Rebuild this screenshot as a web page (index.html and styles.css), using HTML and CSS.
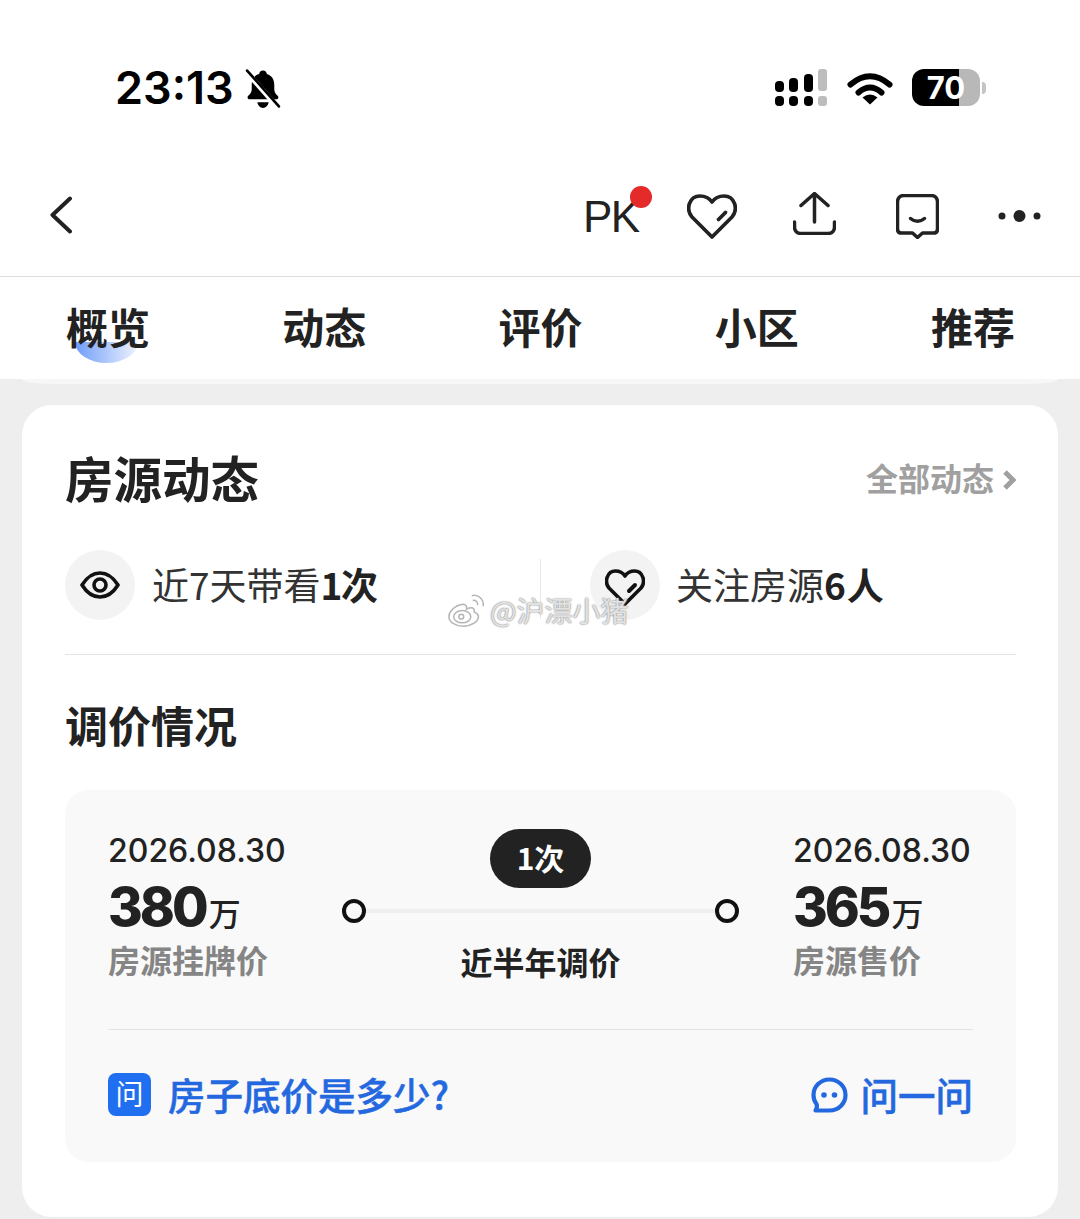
FILE: index.html
```html
<!DOCTYPE html>
<html lang="zh-CN">
<head>
<meta charset="utf-8">
<title>房源动态</title>
<link rel="stylesheet" href="styles.css">
</head>
<body>
<div class="page">
  <header class="status">
    <div class="status-left">
      <span class="time">23:13</span>
      <svg class="bell" viewBox="0 0 34 39"><path d="M17 1.500c2.200 0 3.600 1.600 3.800 3.400 5 1.500 7.200 5.600 7.200 10.600v4.500c0 2.500 1.500 4.300 3.300 6.200 1.300 1.500.6 3.300-1.400 3.300H4c-2 0-2.700-1.800-1.400-3.300C4.500 24.300 6 22.500 6 20v-4.500c0-5 2.200-9.100 7.200-10.600.2-1.800 1.600-3.400 3.800-3.400zM11.500 32.500h11c-.5 3.200-2.800 5.500-5.500 5.500s-5-2.300-5.500-5.500z" fill="#000"/><path d="M1 3l31 35" stroke="#fff" stroke-width="5"/><path d="M1.500 1.500l31 35" stroke="#000" stroke-width="2.600" stroke-linecap="round"/></svg>
    </div>
    <div class="status-right">
      <svg class="signal" viewBox="0 0 52 37"><g fill="#000"><rect x="0" y="12" width="9" height="11" rx="4"/><rect x="14" y="9" width="9" height="14" rx="4"/><rect x="29" y="5" width="9" height="18" rx="4"/><rect x="0" y="27" width="9" height="10" rx="4"/><rect x="14" y="27" width="9" height="10" rx="4"/><rect x="29" y="27" width="9" height="10" rx="4"/></g><g fill="#bdbdbd"><rect x="43" y="0" width="9" height="22" rx="3"/><rect x="43" y="27" width="9" height="10" rx="3"/></g></svg>
      <svg class="wifi" viewBox="0 0 46 34"><g fill="none" stroke="#000" stroke-width="6" stroke-linecap="round"><path d="M3.500 13.500Q23-3 42.500 13.500"/><path d="M11.500 21.500Q23 11.500 34.500 21.500"/></g><path d="M23 33.500L15.500 26.500Q23 20.500 30.500 26.500Z" fill="#000"/></svg>
      <div class="battery"><span class="battery-num">70</span></div>
      <span class="battery-nub"></span>
    </div>
  </header>

  <nav class="nav">
    <svg class="back" viewBox="0 0 24 38"><path d="M21 2.500L3.500 19 21 35.500" fill="none" stroke="#222" stroke-width="4" stroke-linecap="round" stroke-linejoin="round"/></svg>
    <div class="nav-actions">
      <span class="pk">PK<i class="pk-dot"></i></span>
      <svg class="ico-heart" viewBox="0 0 50 45"><path d="M25 43L5 23C-1.500 15.500 2 2 13 2c5.500 0 9.500 2.500 12 6 2.500-3.500 6.500-6 12-6 11 0 14.500 13.500 8 21z" fill="none" stroke="#222" stroke-width="3.700" stroke-linejoin="round"/><path d="M31.500 25.500l7-7" stroke="#222" stroke-width="3.700" stroke-linecap="round"/></svg>
      <svg class="ico-share" viewBox="0 0 43 43"><g fill="none" stroke="#222" stroke-width="3.500" stroke-linecap="round" stroke-linejoin="round"><path d="M21.500 30V2M8 13.500L21.500 1.500 35 13.500"/><path d="M1.500 30v5c0 4 2.500 6.500 6.500 6.500h27c4 0 6.500-2.500 6.500-6.500v-5"/></g></svg>
      <svg class="ico-msg" viewBox="0 0 43 45"><g fill="none" stroke="#222" stroke-width="3.500" stroke-linecap="round" stroke-linejoin="round"><path d="M8 1.500h27c4 0 6.500 2.500 6.500 6.500v27c0 2.500-1.500 4-4 4h-11L21.500 43.500 16.500 39h-11c-2.500 0-4-1.500-4-4V8c0-4 2.500-6.500 6.500-6.500z"/><path d="M14.500 24.500c4 3.500 10 3.500 14 0"/></g></svg>
      <svg class="ico-more" viewBox="0 0 43 12"><circle cx="4" cy="6" r="3.500" fill="#222"/><circle cx="21.500" cy="6" r="6" fill="#222"/><circle cx="39" cy="6" r="3.500" fill="#222"/></svg>
    </div>
  </nav>

  <div class="tabs">
    <span class="tab tab-on">概览<i class="tab-glow"></i></span>
    <span class="tab">动态</span>
    <span class="tab">评价</span>
    <span class="tab">小区</span>
    <span class="tab">推荐</span>
  </div>

  <div class="prev-card"></div>

  <main class="card">
    <div class="card-head">
      <h1 class="title">房源动态</h1>
      <a class="more">全部动态<svg class="more-arrow" viewBox="0 0 14 24"><path d="M3 4l8 8-8 8" fill="none" stroke="#a0a0a0" stroke-width="5"/></svg></a>
    </div>

    <div class="stats">
      <div class="stat">
        <span class="stat-ico"><svg class="eye" viewBox="0 0 40 28"><path d="M2 14C7 6 13 2 20 2s13 4 18 12c-5 8-11 12-18 12S7 22 2 14z" fill="none" stroke="#111" stroke-width="3.600" stroke-linejoin="round"/><circle cx="20" cy="14" r="6" fill="none" stroke="#111" stroke-width="3.600"/></svg></span>
        <span class="stat-text">近7天带看<b class="stat-num">1次</b></span>
      </div>
      <div class="stat stat-right">
        <span class="stat-ico"><svg class="heart-s" viewBox="0 0 40 37"><path d="M20 35L4 19C-1 13 2 2 10.500 2c4.500 0 7.500 2 9.500 5 2-3 5-5 9.500-5C38 2 41 13 36 19z" fill="none" stroke="#111" stroke-width="3.600" stroke-linejoin="round"/><path d="M24 22l6-6" stroke="#111" stroke-width="4" stroke-linecap="round"/></svg></span>
        <span class="stat-text">关注房源<b class="stat-num-wide">6人</b></span>
      </div>
    </div>

    <h2 class="subtitle">调价情况</h2>

    <section class="panel">
      <div class="prices">
        <div class="price">
          <div class="date">2026.08.30</div>
          <div class="amount">380<span class="unit">万</span></div>
          <div class="label">房源挂牌价</div>
        </div>
        <div class="trend">
          <span class="pill">1次</span>
          <div class="track"><i class="node"></i><i class="line"></i><i class="node"></i></div>
          <div class="trend-label">近半年调价</div>
        </div>
        <div class="price price-end">
          <div class="date">2026.08.30</div>
          <div class="amount">365<span class="unit">万</span></div>
          <div class="label">房源售价</div>
        </div>
      </div>
      <div class="ask">
        <div class="ask-left"><span class="ask-badge">问</span><span class="ask-text">房子底价是多少?</span></div>
        <div class="ask-right">
          <svg class="ask-ico" viewBox="0 0 37 36"><path d="M18.500 2.500C27.500 2.500 34.500 9.500 34.500 18S27.500 33.500 18.500 33.500H4.500C6 31 6.500 29 5.500 27 3.500 24.500 2.500 21.500 2.500 18 2.500 9.500 9.500 2.500 18.500 2.500z" fill="none" stroke="#2468e0" stroke-width="4.200" stroke-linejoin="round"/><circle cx="13" cy="18" r="2.800" fill="#2468e0"/><circle cx="23.500" cy="18" r="2.800" fill="#2468e0"/></svg>
          <span class="ask-link">问一问</span>
        </div>
      </div>
    </section>
  </main>

  <div class="watermark">
    <svg class="wb" viewBox="0 0 42 38"><g fill="none" stroke="#b5b5b5" stroke-width="1.600"><path d="M17 13C8 14 2 21 2 26c0 6 8 10 15 10 9 0 16-5 16-10 0-3-3-4-4.500-5 1-3-1-5-5-4-2 .5-3 1-3 1 .5-2-.5-5-3.500-5z" fill="#fff"/><ellipse cx="16" cy="26" rx="9" ry="6.500"/><circle cx="15" cy="26" r="2.500"/><path d="M26 4c7-2 13 4 12 11M27 9c3-1 6 2 5 5"/></g></svg>
    <span class="wm-text">@沪漂小猪</span>
  </div>
</div>
</body>
</html>
```

FILE: styles.css
```css
* { box-sizing: border-box; margin: 0; padding: 0; }
html, body { width: 1080px; height: 1219px; overflow: hidden; }
body { font-family: "Noto Sans CJK SC", "Noto Sans", sans-serif; color: #222; background: #eeeeef; }
i { display: block; font-style: normal; }
svg { display: block; flex: none; }
.page { position: relative; width: 1080px; height: 1219px; }

.status { height: 175px; background: #fff; display: flex; justify-content: space-between; align-items: flex-start; padding: 62px 94px 0 115px; }
.status-left { display: flex; align-items: center; gap: 11px; }
.time { font-family: Inter, sans-serif; font-weight: 600; font-size: 45px; line-height: 52px; color: #000; }
.bell { width: 36px; height: 40px; margin-top: 1px; }
.status-right { display: flex; align-items: flex-start; padding-top: 7px; }
.signal { width: 52px; height: 37px; }
.wifi { width: 46px; height: 34px; margin: 2px 19px 0 20px; }
.battery { width: 68px; height: 37px; border-radius: 12px; background: linear-gradient(90deg, #000 0 69%, #b8b8b8 69% 100%); display: flex; align-items: center; justify-content: center; }
.battery-num { font-family: Inter, sans-serif; font-weight: 700; font-size: 31px; line-height: 37px; color: #fff; }
.battery-nub { width: 4px; height: 12px; background: #c4c4c4; border-radius: 0 6px 6px 0; margin: 13px 0 0 2px; }

.nav { height: 102px; background: #fff; border-bottom: 1px solid #dedede; display: flex; justify-content: space-between; align-items: flex-start; padding: 19px 39px 0 49px; }
.back { width: 24px; height: 38px; margin-top: 2px; }
.nav-actions { display: flex; align-items: flex-start; }
.pk { position: relative; font-family: "Liberation Sans", sans-serif; font-size: 44px; line-height: 44px; color: #222; width: 56px; margin-top: 1px; margin-left: -1px; letter-spacing: -1.500px; }
.pk-dot { position: absolute; left: 47px; top: -9px; width: 22px; height: 22px; border-radius: 50%; background: #e52a2a; }
.ico-heart { width: 50px; height: 45px; margin-left: 48px; }
.ico-share { width: 43px; height: 43px; margin-left: 56px; margin-top: -2px; }
.ico-msg { width: 43px; height: 45px; margin-left: 60px; }
.ico-more { width: 43px; height: 12px; margin-left: 59px; margin-top: 16px; }

.tabs { height: 102px; background: #fff; display: flex; justify-content: space-between; padding: 0 65px 4px 66px; align-items: center; }
.tab { position: relative; isolation: isolate; font-size: 42px; line-height: 60px; font-weight: 700; color: #222; }
.tab-glow { position: absolute; z-index: -1; left: 9px; top: 46px; width: 63px; height: 21px; border-radius: 0 0 50% 50% / 0 0 100% 100%; background: linear-gradient(90deg, #6f9cf8, #eef3fe); }

.prev-card { height: 5px; margin: 0 22px; background: #f7f7f7; border-radius: 0 0 30px 30px / 0 0 5px 5px; }

.card { margin: 21px 22px 0; height: 812px; background: #fff; border-radius: 30px; padding: 45px 42px 0 43px; }
.card-head { display: flex; justify-content: space-between; align-items: center; height: 54px; }
.title { font-size: 48.500px; line-height: 54px; font-weight: 700; color: #222; }
.more { display: flex; align-items: center; gap: 8px; font-size: 32px; line-height: 54px; font-weight: 700; color: #a0a0a0; }
.more-arrow { width: 14px; height: 24px; margin-top: 5px; }

.stats { display: grid; grid-template-columns: 475px 1fr; margin-top: 46px; padding-bottom: 34px; border-bottom: 1px solid #e4e4e4; }
.stat { display: flex; align-items: center; gap: 17px; height: 70px; }
.stat-right { position: relative; padding-left: 50px; gap: 16px; }
.stat-right::before { content: ""; position: absolute; left: 0; top: 9px; width: 1px; height: 60px; background: #e8e8e8; }
.stat-ico { width: 70px; height: 70px; border-radius: 50%; background: #f3f3f3; display: flex; align-items: center; justify-content: center; flex: none; }
.eye { width: 40px; height: 28px; }
.heart-s { width: 40px; height: 37px; margin-top: 4px; }
.stat-text { font-size: 37px; line-height: 50px; color: #333; margin-top: -2px; }
.stat-num { font-weight: 700; color: #222; letter-spacing: -1.500px; }
.stat-num-wide { font-weight: 700; color: #222; letter-spacing: 1px; }

.subtitle { font-size: 43px; line-height: 48px; font-weight: 700; color: #222; margin-top: 45px; }

.panel { margin-top: 42px; height: 372px; background: #f9f9f9; border-radius: 24px; padding: 39px 43px 0; }
.prices { display: grid; grid-template-columns: 234px 397px 1fr; height: 201px; border-bottom: 1px solid #e4e4e4; }
.price-end { margin-left: 54px; }
.date { font-family: Inter, sans-serif; font-size: 32px; line-height: 41px; font-weight: 500; color: #222; white-space: nowrap; padding-top: 1px; }
.amount { font-family: Inter, sans-serif; font-size: 53px; line-height: 60px; font-weight: 800; color: #222; margin-top: 6px; letter-spacing: -3px; white-space: nowrap; }
.unit { font-family: "Noto Sans CJK SC", sans-serif; font-size: 32px; font-weight: 500; letter-spacing: 0; margin-left: 3px; }
.label { font-size: 32px; line-height: 44px; font-weight: 700; color: #858585; margin-top: -5px; white-space: nowrap; }

.trend { display: flex; flex-direction: column; align-items: center; }
.pill { width: 101px; height: 59px; border-radius: 30px; background: #222; color: #fff; font-size: 30px; line-height: 57px; font-weight: 700; text-align: center; }
.track { display: flex; align-items: center; width: 100%; height: 46px; }
.node { width: 24px; height: 24px; border-radius: 50%; border: 4px solid #111; flex: none; }
.line { flex: 1; height: 4px; background: #eee; }
.trend-label { font-size: 32px; line-height: 44px; font-weight: 700; color: #222; margin-top: 5px; }

.ask { display: flex; justify-content: space-between; align-items: center; height: 129px; }
.ask-left { display: flex; align-items: center; gap: 17px; }
.ask-badge { width: 43px; height: 43px; border-radius: 8px; background: #1f6ff0; color: #fff; font-size: 28px; line-height: 41px; text-align: center; }
.ask-text { font-size: 37.500px; line-height: 50px; font-weight: 500; color: #2468e0; margin-top: -2px; -webkit-text-stroke: 0.5px #2468e0; }
.ask-right { display: flex; align-items: center; gap: 13px; }
.ask-ico { width: 37px; height: 36px; }
.ask-link { font-size: 37.500px; line-height: 50px; font-weight: 500; color: #2468e0; margin-top: -2px; -webkit-text-stroke: 0.5px #2468e0; }

.watermark { position: absolute; left: 447px; top: 590px; display: flex; align-items: center; gap: 3px; }
.wb { width: 40px; height: 38px; }
.wm-text { font-size: 28px; line-height: 40px; color: rgba(255,255,255,.75); text-shadow: 0 0 2px #8a8a8a, 0 0 1px #8a8a8a; }
```
